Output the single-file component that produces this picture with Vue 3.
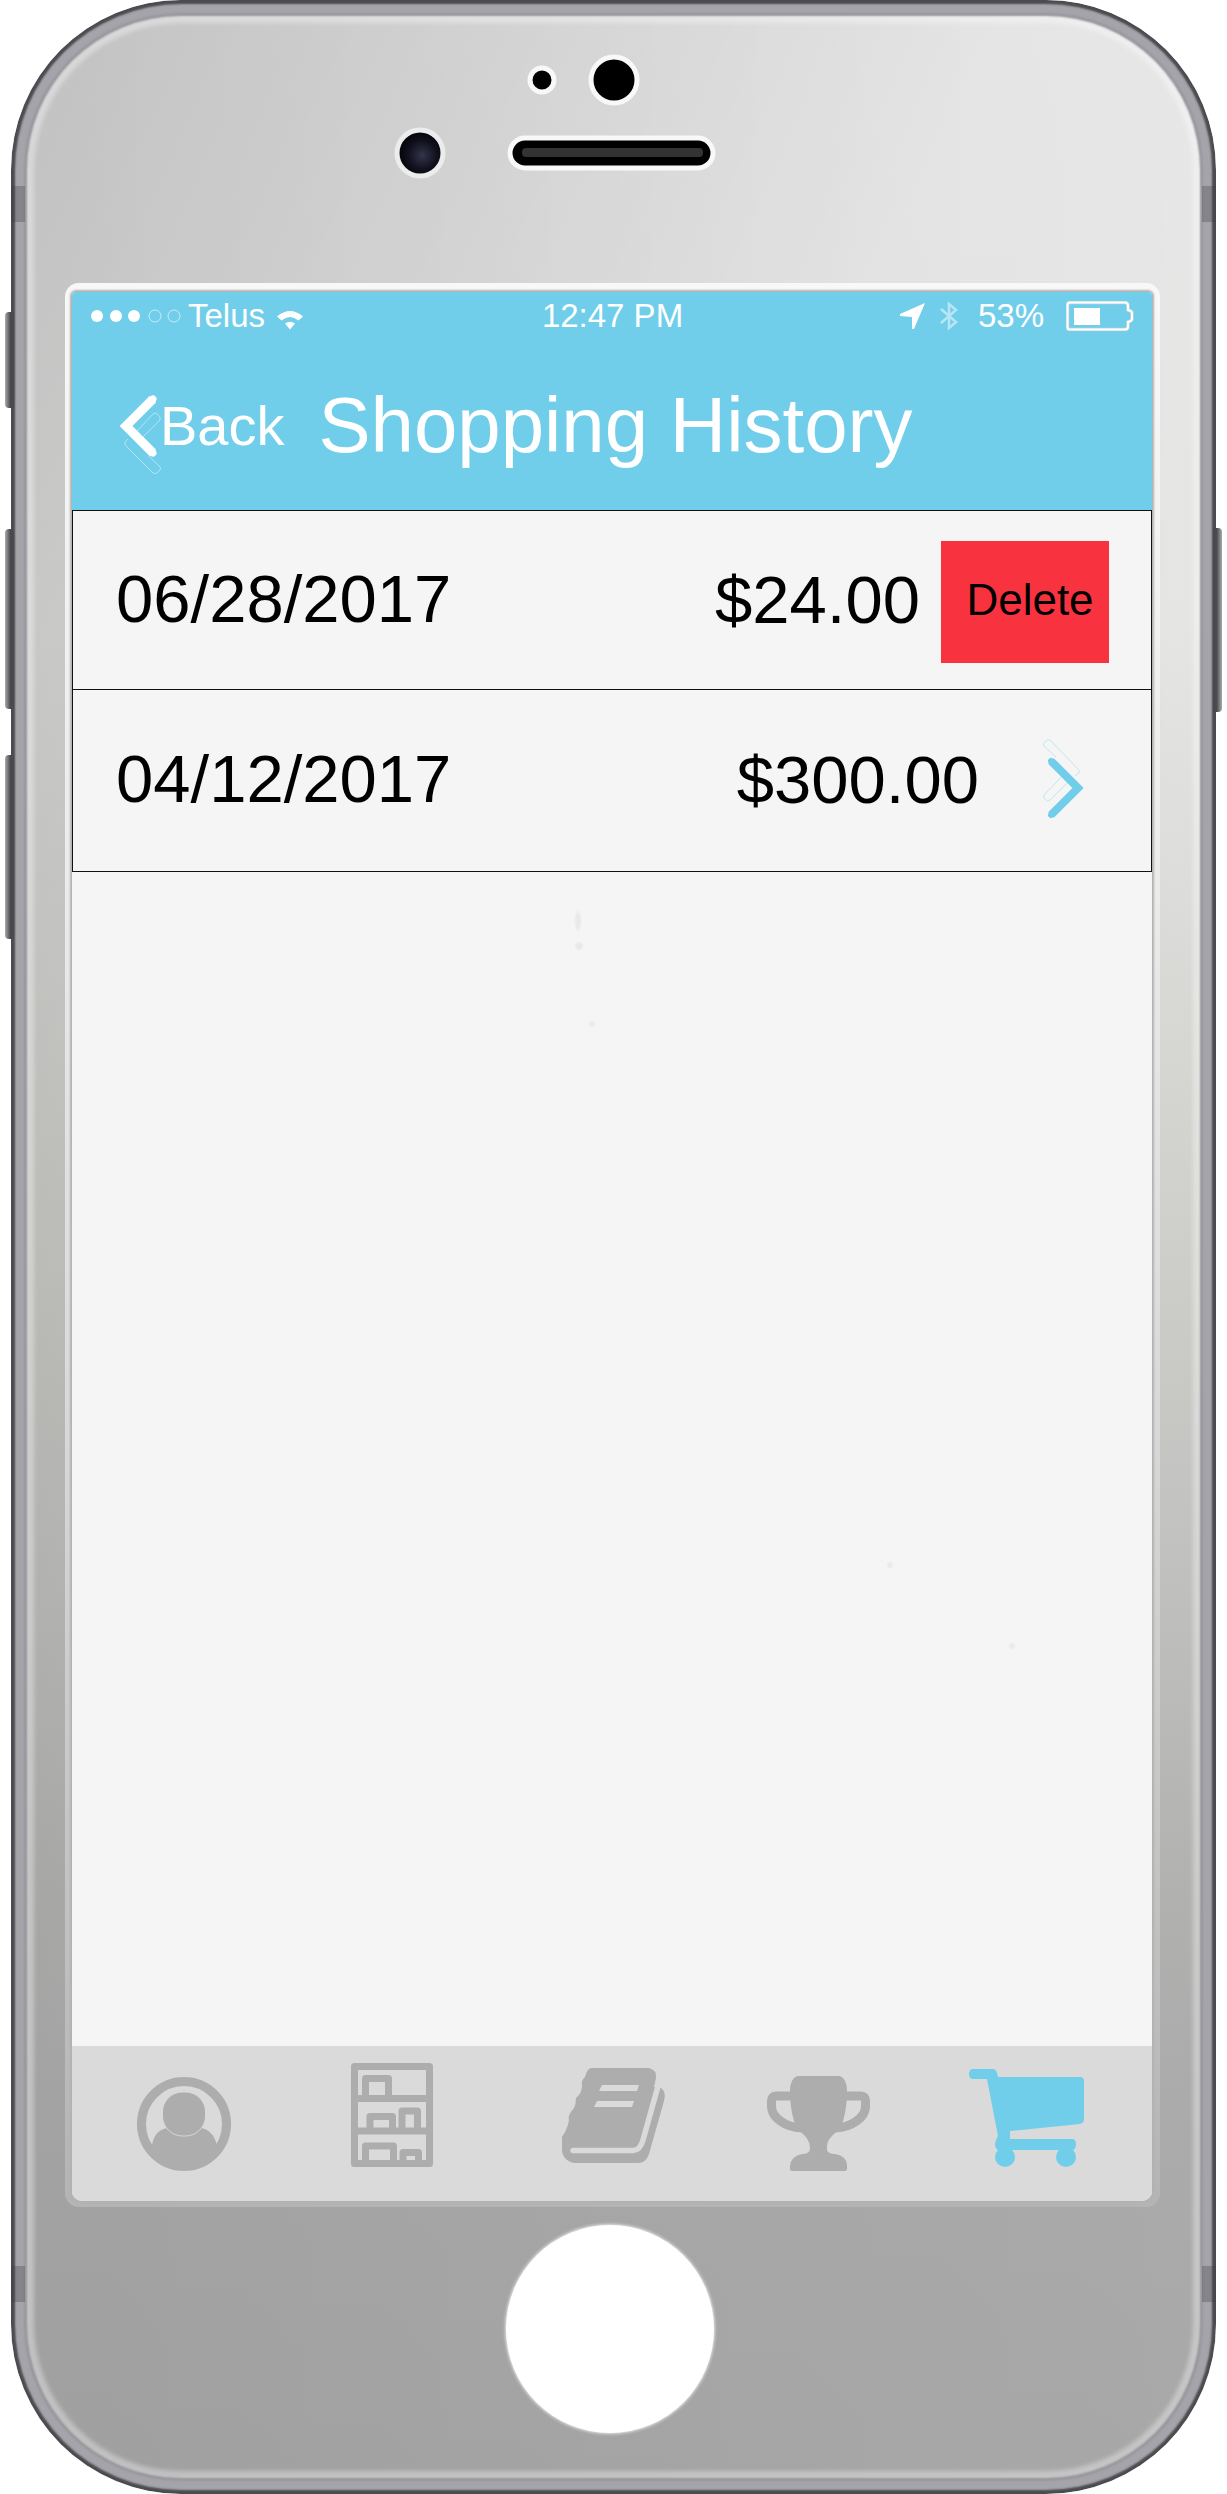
<script setup>
const purchases = [
  { date: '06/28/2017', amount: '$24.00', removing: true },
  { date: '04/12/2017', amount: '$300.00', removing: false },
]
</script>

<template>
  <div class="stage">
    <div class="phone">
      <span class="key key-mute"></span>
      <span class="key key-up"></span>
      <span class="key key-down"></span>
      <span class="key key-power"></span>
      <span class="band band-tl"></span>
      <span class="band band-tr"></span>
      <span class="band band-bl"></span>
      <span class="band band-br"></span>

      <div class="forehead">
        <svg width="440" height="283" viewBox="394 0 440 283" aria-hidden="true">
          <defs>
            <radialGradient id="lens" cx="55%" cy="55%" r="60%">
              <stop offset="0" stop-color="#34344c" />
              <stop offset="0.5" stop-color="#12121f" />
              <stop offset="0.8" stop-color="#05050c" />
              <stop offset="1" stop-color="#3c3c4c" />
            </radialGradient>
          </defs>
          <g fill="#000" stroke="#f8f8f8" stroke-width="5">
            <circle cx="542" cy="80" r="12" />
            <circle cx="614" cy="80" r="23" />
            <circle cx="420" cy="153" r="23" fill="url(#lens)" stroke="#ececec" />
            <rect x="510" y="138" width="203" height="30" rx="15" />
          </g>
          <rect x="522" y="148" width="181" height="9" rx="4" fill="#333" />
        </svg>
      </div>

      <div class="bezel">
        <main class="screen">
          <header class="top">
            <div class="status">
              <div class="status-left">
                <svg width="90" height="14" viewBox="0 0 90 14" aria-hidden="true">
                  <g fill="#fff">
                    <circle cx="6" cy="7" r="6" />
                    <circle cx="25" cy="7" r="6" />
                    <circle cx="43" cy="7" r="6" />
                  </g>
                  <g fill="none" stroke="#fff" stroke-opacity="0.6">
                    <circle cx="64" cy="7" r="6" />
                    <circle cx="83" cy="7" r="6" />
                  </g>
                </svg>
                <span class="carrier">Telus</span>
                <svg class="wifi" width="28" height="20" viewBox="0 0 28 20" aria-hidden="true">
                  <path d="M1 6.500Q14-4.500 27 6.500L22.500 10.500Q14 3.500 5.500 10.500Z" fill="#fff" />
                  <path d="M9 13.500Q14 10 19 13.500L14 19.500Z" fill="#fff" />
                </svg>
              </div>
              <span>12:47 PM</span>
              <div class="status-right">
                <svg width="26" height="28" viewBox="0 0 26 28" aria-hidden="true">
                  <path d="M25 1L14 27H12V15L0 14V12Z" fill="#fff" />
                </svg>
                <svg class="bluetooth" width="18" height="30" viewBox="0 0 18 30" aria-hidden="true">
                  <path d="M1 8L16 21L9 27V3L16 9L1 22" fill="none" stroke="#fff" stroke-width="2.500" />
                </svg>
                <span class="percent">53%</span>
                <svg width="68" height="30" viewBox="0 0 68 30" aria-hidden="true">
                  <path d="M4 1.500H59Q62 1.500 62 5V9Q66 10 66 12V18Q66 20 62 21V25Q62 28.500 59 28.500H4Q1.500 28.500 1.500 26V4Q1.500 1.500 4 1.500Z" fill="none" stroke="#c4d4da" stroke-width="3.500" />
                  <path d="M4 1.500H59Q62 1.500 62 5V9Q66 10 66 12V18Q66 20 62 21V25Q62 28.500 59 28.500H4Q1.500 28.500 1.500 26V4Q1.500 1.500 4 1.500Z" fill="none" stroke="#fff" stroke-width="2" />
                  <rect x="8" y="7" width="26" height="17" fill="#fff" />
                </svg>
              </div>
            </div>
            <nav class="bar">
              <button class="back" type="button">
                <svg width="40" height="84" viewBox="120 383 40 84" aria-hidden="true">
                  <g fill="none" stroke="#fff" stroke-opacity="0.45">
                    <path d="M137 431L153 414Q155 412 157 414L160 417Q161 419 159 421L143 437" />
                    <path d="M128 439L125 442Q125 445 126 446L153 473Q155 474 157 473L160 470Q161 468 160 467L149 456" />
                  </g>
                  <path d="M153 399L126 426L153 453" fill="none" stroke="#fff" stroke-width="9" />
                  <path d="M153 399L126 426L153 453" fill="none" stroke="#fff" stroke-width="7" stroke-linecap="round" />
                </svg>
                <span>Back</span>
              </button>
              <h1>Shopping History</h1>
            </nav>
          </header>

          <ul class="history">
            <li v-for="item in purchases" :key="item.date">
              <time>{{ item.date }}</time>
              <span class="amount">{{ item.amount }}</span>
              <button v-if="item.removing" class="delete" type="button">Delete</button>
              <button v-else class="open" type="button" aria-label="Open purchase">
                <svg width="44" height="84" viewBox="1043 739 44 84" aria-hidden="true">
                  <g fill="none" stroke="#70ceea" stroke-opacity="0.4">
                    <path d="M1057 757L1045 746Q1044 744 1045 743L1048 740Q1050 739 1052 741L1079 769Q1081 771 1080 773L1076 776" />
                    <path d="M1062 777L1045 795Q1044 797 1045 798L1047 800Q1049 802 1051 800L1068 783" />
                  </g>
                  <path d="M1052 761L1079 788L1052 815" fill="none" stroke="#70ceea" stroke-width="8" />
                  <path d="M1052 761L1079 788L1052 815" fill="none" stroke="#70ceea" stroke-width="6" stroke-linecap="round" />
                </svg>
              </button>
            </li>
          </ul>

          <div class="empty"></div>

          <nav class="tabs">
            <button type="button" aria-label="Profile">
              <svg width="124" height="124" viewBox="124 2062 124 124" aria-hidden="true">
                <circle cx="185" cy="2124" r="42.500" fill="none" stroke="#adadad" stroke-width="9" />
                <path d="M153 2146C154 2134 162 2128 170 2128H200C209 2128 216 2135 218 2146A40 40 0 0 1 153 2146Z" fill="#adadad" />
                <rect x="163.500" y="2092" width="43" height="44" rx="20" fill="#adadad" stroke="#d9d9d9" />
              </svg>
            </button>
            <button type="button" aria-label="Pantry">
              <svg width="124" height="124" viewBox="334 2062 124 124" aria-hidden="true">
                <g fill="none" stroke="#adadad" stroke-width="7" stroke-linejoin="round">
                  <path d="M355.500 2066.500H430.500V2163.500H355.500ZM355.500 2098.500H430.500M355.500 2131H430.500" />
                  <path d="M366.500 2096V2078.500H389.500V2096" />
                  <path d="M371 2129V2116.500H393.500V2129M403 2129V2111H418.500V2129" />
                  <path d="M366.500 2162V2146H394.500V2162M404 2162V2152.500H419.500V2162" />
                </g>
              </svg>
            </button>
            <button type="button" aria-label="Recipes">
              <svg width="124" height="124" viewBox="543 2062 124 124" aria-hidden="true">
                <path d="M591 2068H649Q657 2070 656 2078L654 2087L659 2087Q667 2090 664 2101L649 2154Q646 2163 638 2163H574Q562 2160 562 2149V2137Q568 2128 569 2120Q567 2116 574 2108Q576 2104 576 2098Q582 2093 582 2086Q581 2080 585 2077Q587 2069 591 2068Z" fill="#adadad" />
                <path d="M660 2079L643 2140Q640 2150.500 633 2150.500H573" fill="none" stroke="#dadada" stroke-width="5.500" stroke-linecap="round" />
                <path d="M602 2085H639L637 2091H599ZM597 2101H634L632 2107H594Z" fill="#dadada" />
              </svg>
            </button>
            <button type="button" aria-label="Rewards">
              <svg width="124" height="124" viewBox="753 2062 124 124" aria-hidden="true">
                <path d="M797 2076H840Q847 2079 847 2091Q847 2108 843 2121Q840 2129 835 2133Q827 2140 827 2146V2150Q828 2154 835 2154Q847 2156 847 2166V2169Q847 2171 845 2171H792Q790 2171 790 2169V2166Q791 2156 802 2154Q810 2154 810 2148Q810 2140 802 2133Q797 2129 794 2121Q790 2108 790 2091Q790 2079 797 2076Z" fill="#adadad" />
                <path d="M792 2096H776Q771.500 2096 771.500 2101V2107C772 2117 784 2127 802 2128M845 2096H861Q865.500 2096 865.500 2101V2107C865 2117 853 2127 835 2128" fill="none" stroke="#adadad" stroke-width="9" />
              </svg>
            </button>
            <button type="button" aria-label="Cart">
              <svg width="124" height="124" viewBox="963 2062 124 124" aria-hidden="true">
                <g fill="#70ceea">
                  <path d="M972 2069H994Q997 2070 998 2077H1081Q1084 2078 1084 2081V2119Q1084 2123 1080 2124L1010 2131V2139H1073Q1076 2140 1076 2144Q1076 2149 1073 2150H998Q995 2148 995 2144Q996 2139 998 2136L987 2079H972Q969 2078 969 2074Q969 2070 972 2069Z" />
                  <circle cx="1005" cy="2157" r="10" />
                  <circle cx="1066" cy="2157" r="10" />
                </g>
              </svg>
            </button>
          </nav>
        </main>
      </div>

      <div class="chin">
        <button class="home" type="button" aria-label="Home"></button>
      </div>
    </div>
  </div>
</template>

<style>
body {
  margin: 0;
  background: #fff;
}
</style>

<style scoped>
.stage {
  display: flex;
  padding: 0 11px;
  font-family: "Liberation Sans", Arial, sans-serif;
}
button {
  margin: 0;
  padding: 0;
  border: 0;
  background: none;
  color: inherit;
  font: inherit;
  cursor: pointer;
}
svg {
  display: block;
  flex: none;
}
.phone {
  position: relative;
  flex: 1;
  display: flex;
  flex-direction: column;
  box-sizing: border-box;
  min-height: 100vh;
  border-radius: 170px;
  background:
    linear-gradient(to bottom right, rgba(0, 0, 0, 0.12), rgba(0, 0, 0, 0) 42%),
    linear-gradient(to right, rgba(0, 0, 0, 0.05), rgba(0, 0, 0, 0)),
    linear-gradient(to bottom, #e7e7e7 0, #e5e5e4 25%, #dcdcda 36%, #ceceCA 50%, #bebebd 65%, #b1b1b0 76%, #ababab 84%, #a8a8a8 100%);
  box-shadow:
    inset 0 0 2px 4px #4b4b50,
    inset 0 0 2px 13px #a5a4aa,
    inset 0 0 2px 16px #98979d,
    inset 0 0 4px 23px rgba(255, 255, 255, 0.35);
}
.key {
  position: absolute;
  left: -6px;
  width: 9px;
  border-radius: 4px 0 0 4px;
  background: linear-gradient(to right, #aaa, #4a4a4e 60%);
}
.key-mute { top: 312px; height: 96px; }
.key-up { top: 529px; height: 180px; }
.key-down { top: 755px; height: 184px; }
.key-power {
  top: 528px;
  right: -6px;
  left: auto;
  height: 184px;
  border-radius: 0 4px 4px 0;
  background: linear-gradient(to left, #aaa, #4a4a4e 60%);
}
.band {
  position: absolute;
  width: 14px;
  height: 36px;
  background: rgba(60, 60, 65, 0.3);
}
.band-tl { top: 186px; left: 0; }
.band-tr { top: 186px; right: 0; }
.band-bl { bottom: 192px; left: 0; }
.band-br { bottom: 192px; right: 0; }
.forehead {
  display: flex;
  justify-content: center;
  height: 283px;
}
.bezel {
  flex: 1;
  display: flex;
  margin: 0 56px 0 54px;
  padding: 9px 8px 6px 7px;
  border-radius: 14px;
  background: linear-gradient(to bottom, #f8f8f8, #ececec 30%, #d8d8d8 60%, #b4b4b4);
}
.screen {
  flex: 1;
  display: flex;
  flex-direction: column;
  min-width: 0;
  overflow: hidden;
  border-radius: 4px 4px 10px 10px;
  background: #f5f5f5;
  box-shadow: 0 0 2px 2px #b2b2b2;
}
.top {
  background: #70ceea;
  color: #fff;
}
.status {
  display: grid;
  grid-template-columns: 1fr auto 1fr;
  align-items: center;
  height: 48px;
  padding: 0 18px 0 19px;
  font-size: 33px;
  line-height: 40px;
}
.status-left,
.status-right {
  display: flex;
  align-items: center;
}
.status-right {
  justify-content: flex-end;
}
.carrier {
  margin: 0 11px 0 7px;
}
.wifi {
  margin-top: 8px;
}
.bluetooth {
  margin-left: 14px;
  opacity: 0.5;
}
.percent {
  margin: 0 22px 0 20px;
}
.bar {
  display: flex;
  align-items: center;
  gap: 34px;
  height: 170px;
  padding-left: 48px;
}
.back {
  display: flex;
  align-items: center;
  font-size: 56px;
}
.back svg {
  overflow: visible;
}
h1 {
  margin: 0;
  font-size: 78px;
  font-weight: 400;
  white-space: nowrap;
}
.history {
  margin: 0;
  padding: 0;
  list-style: none;
  border: 1px solid #111;
  color: #000;
  font-size: 67px;
}
.history li {
  display: flex;
  align-items: center;
  height: 178px;
  padding: 0 42px 0 43px;
}
.history li + li {
  height: 181px;
  border-top: 1px solid #111;
}
.history time {
  padding-bottom: 4px;
}
.amount {
  margin-left: auto;
  padding-bottom: 2px;
}
.delete {
  width: 168px;
  height: 122px;
  margin: 4px 0 0 21px;
  padding: 0 0 4px 10px;
  background: #f8333f;
  font-size: 44px;
}
.open {
  display: flex;
  justify-content: flex-end;
  width: 130px;
  padding: 0 23px 0 0;
}
.empty {
  flex: 1;
  background:
    radial-gradient(ellipse 4px 12px at 506px 49px, #e9e9e9 50%, transparent),
    radial-gradient(circle 5px at 507px 74px, #e9e9e9 50%, transparent),
    radial-gradient(circle 4px at 520px 152px, #ebebeb 50%, transparent),
    radial-gradient(circle 4px at 818px 693px, #ebebeb 50%, transparent),
    radial-gradient(circle 4px at 940px 774px, #ebebeb 50%, transparent);
}
.tabs {
  display: grid;
  grid-template-columns: repeat(5, 1fr);
  align-items: center;
  height: 155px;
  padding: 0 22px 0 8px;
  background: #dadada;
}
.tabs button {
  display: flex;
  justify-content: center;
}
.chin {
  display: flex;
  justify-content: center;
  align-items: center;
  height: 287px;
  padding-right: 7px;
}
.home {
  width: 208px;
  height: 208px;
  margin-bottom: 43px;
  border-radius: 50%;
  background: #fff;
  box-shadow: 0 0 3px 1px #e4e4e4;
}
</style>
